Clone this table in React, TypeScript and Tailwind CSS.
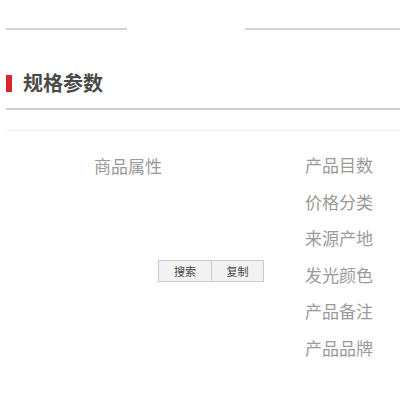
const specs = ["产品目数", "价格分类", "来源产地", "发光颜色", "产品备注", "产品品牌"];

const App = () => {
  return (
    <div
      className="w-[400px] h-[400px] bg-white pl-[6px] overflow-hidden"
      style={{ fontFamily: '"Noto Sans CJK SC", "Noto Sans", sans-serif' }}
    >
      <div className="flex justify-between pt-[28px]">
        <div className="w-[121px] h-[2px] bg-[#d2d2d2]" />
        <div className="w-[155px] h-[2px] bg-[#d2d2d2]" />
      </div>

      <div className="flex items-center mt-[41px] h-[24px]">
        <div className="w-[6px] h-[17px] bg-[#d9262c]" />
        <h2 className="ml-[11px] text-[20px] leading-[24px] font-bold text-[#4a4a4a]">规格参数</h2>
      </div>

      <div className="mt-[13px] h-[2px] bg-[#cfcfcf]" />
      <div className="mt-[20px] h-px bg-[#efefef]" />

      <div className="flex mt-[16px]">
        <div className="w-[299px] flex flex-col">
          <div className="pl-[88px] text-[17px] leading-[37px] text-[#9a9a9a]">商品属性</div>
          <div className="flex ml-[152px] mt-[76px]">
            <button className="w-[54px] h-[22px] bg-[#f2f2f2] border border-[#cccccc] text-[11px] text-[#444]">
              搜索
            </button>
            <button className="w-[52px] h-[22px] bg-[#f2f2f2] border border-l-0 border-[#cccccc] text-[11px] text-[#444]">
              复制
            </button>
          </div>
        </div>
        <div className="flex flex-col">
          {specs.map((s) => (
            <div key={s} className="text-[17px] leading-[36.6px] text-[#9a9a9a]">
              {s}
            </div>
          ))}
        </div>
      </div>
    </div>
  );
};

export default App;
